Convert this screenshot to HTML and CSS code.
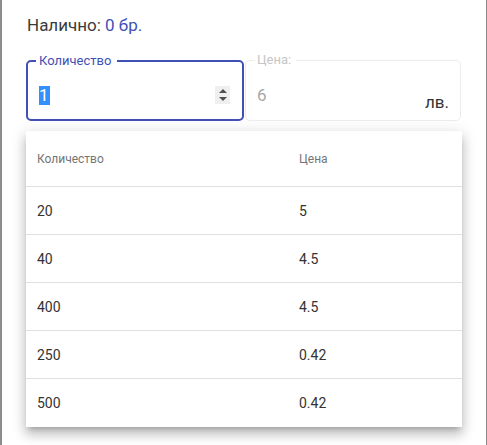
FILE: index.html
```html
<!DOCTYPE html>
<html lang="bg">
<head>
<meta charset="utf-8">
<link rel="stylesheet" href="styles.css">
</head>
<body>
<div class="dialog">
  <div class="stock">Налично: <span class="stock-value">0 бр.</span></div>
  <div class="fields">
    <div class="field field-active">
      <span class="field-label">Количество</span>
      <div class="field-row">
        <span class="value"><span class="selected">1</span></span>
        <span class="spinner"><span class="tri-up"></span><span class="tri-down"></span></span>
      </div>
    </div>
    <div class="field field-disabled">
      <span class="field-label">Цена:</span>
      <div class="field-row">
        <span class="value value-disabled">6</span>
        <span class="suffix">лв.</span>
      </div>
    </div>
  </div>
  <div class="panel">
    <table class="price-table">
      <thead>
        <tr><th class="col-qty">Количество</th><th>Цена</th></tr>
      </thead>
      <tbody>
        <tr><td>20</td><td>5</td></tr>
        <tr><td>40</td><td>4.5</td></tr>
        <tr><td>400</td><td>4.5</td></tr>
        <tr><td>250</td><td>0.42</td></tr>
        <tr><td>500</td><td>0.42</td></tr>
      </tbody>
    </table>
  </div>
</div>
</body>
</html>
```
FILE: styles.css
```css
html, body {
  margin: 0;
  padding: 0;
}
body {
  background: #8d8d8d;
  font-family: Roboto, "Noto Sans", "Liberation Sans", sans-serif;
  width: 487px;
  height: 445px;
  overflow: hidden;
}
.dialog {
  box-sizing: border-box;
  margin-left: 2px;
  width: 484px;
  height: 445px;
  background: #fff;
  padding: 15px 0 0 24px;
}
.stock {
  margin-left: 1px;
  font-size: 17px;
  line-height: 20px;
  color: #3a3a3a;
}
.stock-value {
  color: #3f51b5;
}
.fields {
  display: flex;
  gap: 1px;
  margin-top: 25px;
}
.field {
  position: relative;
  box-sizing: border-box;
  height: 61px;
  border-radius: 5px;
}
.field-active {
  width: 218px;
  border: 2px solid #3f51b5;
  padding: 24px 11px 0 11px;
}
.field-disabled {
  width: 216px;
  border: 1px solid #ececec;
  padding: 25px 11px 0 11px;
}
.field-label {
  position: absolute;
  top: -8px;
  left: 8px;
  padding: 0 6px 0 3px;
  background: #fff;
  font-size: 13px;
  line-height: 14px;
  color: #3f51b5;
}
.field-disabled .field-label {
  top: -8px;
  left: 8px;
  padding: 0 5px 0 3px;
  color: #c6c6c6;
}
.field-row {
  display: flex;
  align-items: flex-start;
  justify-content: space-between;
}
.value {
  font-size: 17px;
  line-height: 19px;
  color: #333;
}
.selected {
  display: inline-block;
  background: #3390ff;
  color: #fff;
  padding: 0 1px 0 0;
}
.value-disabled {
  color: #a8a8a8;
}
.spinner {
  display: flex;
  flex-direction: column;
  align-items: center;
  justify-content: center;
  gap: 4px;
  width: 15px;
  height: 18px;
  background: #efefef;
  margin-right: 1px;
}
.tri-up, .tri-down {
  width: 0;
  height: 0;
  border-left: 4px solid transparent;
  border-right: 4px solid transparent;
}
.tri-up {
  border-bottom: 4px solid #505050;
}
.tri-down {
  border-top: 4px solid #505050;
}
.suffix {
  font-size: 17px;
  line-height: 19px;
  color: #333;
  margin-top: 7px;
}
.panel {
  margin-top: 10px;
  width: 436px;
  background: #fff;
  box-shadow: 0 5px 5px -3px rgba(0,0,0,.2), 0 8px 10px 1px rgba(0,0,0,.14), 0 3px 14px 2px rgba(0,0,0,.12);
}
.price-table {
  width: 100%;
  border-collapse: collapse;
  table-layout: fixed;
}
.col-qty {
  width: 240px;
}
.price-table th {
  height: 55px;
  padding: 0 11px;
  text-align: left;
  font-weight: 400;
  font-size: 12px;
  color: #757575;
  border-bottom: 1px solid #e0e0e0;
}
.price-table td {
  height: 47px;
  padding: 0 11px;
  font-size: 14px;
  color: #333;
  border-bottom: 1px solid #e0e0e0;
}
.price-table tbody tr:last-child td {
  border-bottom: none;
  height: 48px;
}
```
